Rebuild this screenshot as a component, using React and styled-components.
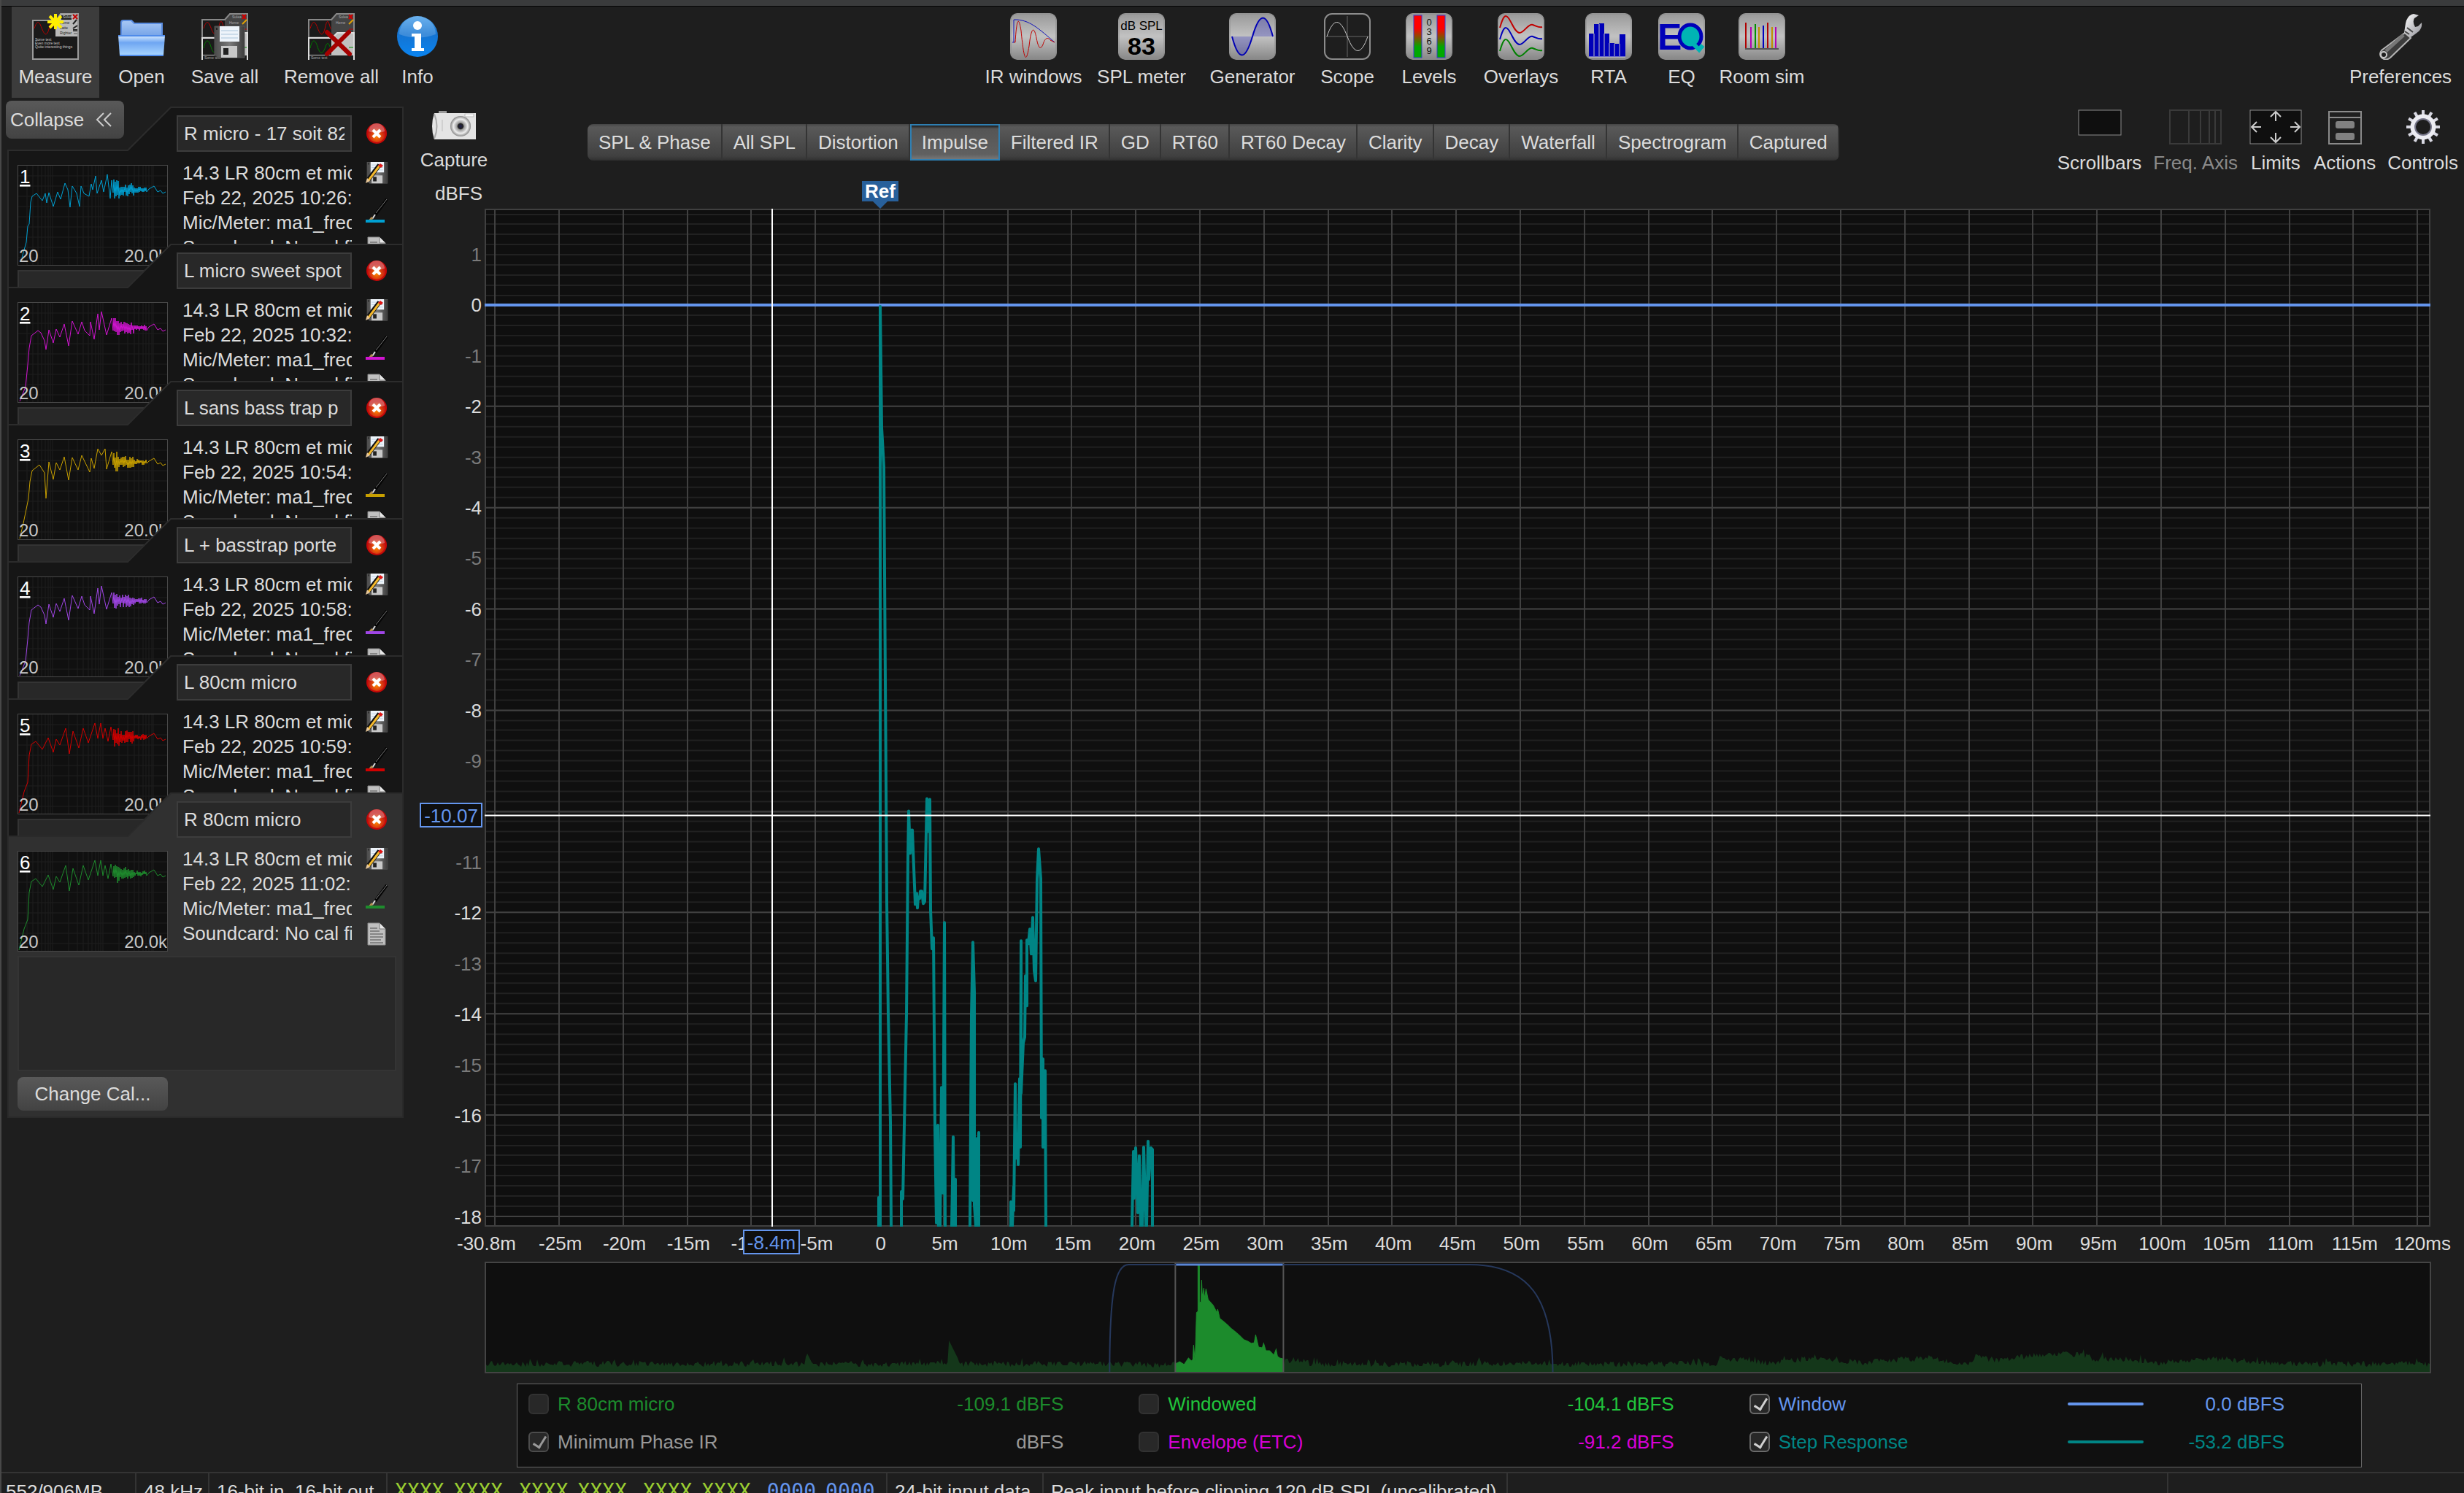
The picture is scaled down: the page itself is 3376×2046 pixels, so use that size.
import React from "react";
import styled, { createGlobalStyle, css } from "styled-components";

const GlobalStyle = createGlobalStyle`
  * {
    box-sizing: border-box;
  }

  body {
    margin: 0;
    background: #1e1e1e;
    color: #dcdcdc;
    font-family: "Liberation Sans", Arial, sans-serif;
    font-size: 26px;
    line-height: 34px;
  }

  button,
  input,
  textarea {
    font: inherit;
    color: inherit;
    margin: 0;
    padding: 0;
    border: none;
    background: none;
  }

  svg {
    display: block;
  }
`;

const Page = styled.div`
  display: flex;
  flex-direction: column;
  height: 100vh;
  overflow: hidden;
  border-left: 2px solid #484848;
`;

const TitleEdge = styled.div`
  flex: none;
  height: 9px;
  background: #3a3b3c;
  border-bottom: 1px solid #050505;
`;

const Toolbar = styled.header`
  flex: none;
  display: flex;
  justify-content: space-between;
  height: 125px;
  padding: 0 18px 0 14px;
`;

const ToolGroup = styled.div`
  display: flex;
  gap: ${(p) => p.$gap || 0}px;
`;

const ToolButton = styled.button`
  display: flex;
  flex-direction: column;
  align-items: center;
  width: ${(p) => p.$width}px;
  padding-top: 9px;
  gap: 6px;
  white-space: nowrap;
  background: ${(p) => (p.$active ? "#3c3c3c" : "none")};
`;

const Body = styled.div`
  flex: 1;
  display: flex;
  min-height: 0;
`;

/* ---------- measurements panel ---------- */

const Sidebar = styled.aside`
  flex: none;
  width: 566px;
  padding: 4px 0 0 6px;
`;

const raised = css`
  background: linear-gradient(#595959, #434343);
  border-radius: 8px;
`;

const CollapseButton = styled.button`
  ${raised}
  position: relative;
  z-index: 1;
  display: flex;
  align-items: center;
  gap: 16px;
  width: 162px;
  height: 52px;
  padding-left: 6px;
`;

const CardList = styled.div`
  margin: -44px 0 0 2px;
`;

const Card = styled.section`
  position: relative;
  isolation: isolate;
  width: 543px;
  height: 446px;
  padding: 12px 10px 10px 14px;

  & + & {
    margin-top: -258px;
  }
`;

const CardShape = styled.svg`
  position: absolute;
  top: 0;
  left: 0;
  z-index: -1;
`;

const CardTop = styled.div`
  display: grid;
  grid-template-columns: 206px 240px 1fr;
  column-gap: 12px;
  height: 206px;
`;

const Thumb = styled.svg`
  align-self: end;
`;

const NameInput = styled.input`
  width: 240px;
  height: 50px;
  padding: 0 8px;
  background: #282828;
  border: 2px solid #3c3c3c;
`;

const Details = styled.div`
  margin-top: 12px;
  padding-left: 8px;
  overflow: hidden;
  white-space: nowrap;
`;

const CardIcons = styled.div`
  display: flex;
  flex-direction: column;
  gap: 20px;
  padding: 10px 0 0 6px;

  button:first-child {
    margin-bottom: 4px;
  }
`;

const IconButton = styled.button`
  width: 32px;
  height: 30px;
`;

const Notes = styled.textarea`
  display: block;
  width: 100%;
  height: 158px;
  margin: 6px 0 8px;
  background: #282828;
  border: 2px solid #343434;
  resize: none;
`;

const CalButton = styled.button`
  ${raised}
  width: 206px;
  height: 46px;
`;

/* ---------- graph panel ---------- */

const Main = styled.main`
  flex: 1;
  min-width: 0;
  display: flex;
  flex-direction: column;
`;

const GraphHeader = styled.div`
  display: flex;
  align-items: flex-start;
  height: 114px;
  padding: 16px 8px 0;
`;

const CaptureButton = styled.button`
  display: flex;
  flex-direction: column;
  align-items: center;
  gap: 10px;
  width: 92px;
  padding-top: 2px;
`;

const Tabs = styled.nav`
  display: flex;
  height: 50px;
  margin: 20px 0 0 137px;
  border-radius: 8px;
  overflow: hidden;
`;

const Tab = styled.button`
  padding: 0 14px 0 15px;
  white-space: nowrap;
  background: linear-gradient(#454545, #595959 8%, #404040 88%, #303030);
  border-right: 2px solid #343434;

  ${(p) =>
    p.$selected &&
    css`
      background: linear-gradient(#1c1c1c, #555 10%, #606060 86%, #777);
      border: 2px solid #2f7fb2;
      padding: 0 14px;
    `}
`;

const GraphTools = styled.div`
  display: flex;
  gap: 16px;
  margin-left: auto;
`;

const GraphTool = styled.button`
  display: flex;
  flex-direction: column;
  align-items: center;
  gap: 8px;
  white-space: nowrap;

  &:disabled {
    color: #8a8a8a;
  }
`;

const Graph = styled.div`
  flex: 1;
  min-height: 0;
  display: grid;
  grid-template-columns: 96px 1fr;
  grid-template-rows: 38px 1fr 48px;
  padding-right: 46px;
`;

const AxisTitle = styled.div`
  padding-right: 3px;
  text-align: right;
`;

const YAxis = styled.div`
  grid-row: 2;
  display: flex;
  flex-direction: column;
  justify-content: space-between;
  padding: 50px 4px 0 0;
  text-align: right;
  line-height: 26px;
`;

const YLabel = styled.span`
  min-height: 26px;
  color: ${(p) => (p.$minor ? "#7a7a7a" : "#dcdcdc")};
`;

const Plot = styled.div`
  grid-row: 2;
  grid-column: 2;
  position: relative;
  min-height: 0;
`;

const Fill = styled.svg`
  width: 100%;
  height: 100%;
`;

const XAxis = styled.div`
  grid-row: 3;
  grid-column: 2;
  display: grid;
  grid-template-columns: repeat(31, 1fr);
  margin: 0 -28px;
  line-height: 46px;
  text-align: center;
  white-space: nowrap;

  span:first-child {
    margin-left: -10px;
    text-align: left;
  }

  span:last-child {
    text-align: right;
  }
`;

const CursorBadge = styled.div`
  position: absolute;
  z-index: 1;
  height: 34px;
  line-height: 32px;
  text-align: center;
  color: #6495ed;
  background: #0f0f0f;
  border: 2px solid #6495ed;
`;

const YBadge = styled(CursorBadge)`
  left: -89px;
  width: 86px;
  top: 59.6%;
  transform: translateY(-50%);
`;

const XBadge = styled(CursorBadge)`
  left: 14.74%;
  width: 78px;
  bottom: -38px;
  transform: translateX(-50%);
`;

const RefMarker = styled.div`
  position: absolute;
  left: 20.33%;
  bottom: 100%;
  width: 50px;
  margin-bottom: 10px;
  line-height: 28px;
  text-align: center;
  font-weight: bold;
  color: #fff;
  background: #28609b;
  transform: translateX(-50%);

  &::after {
    content: "";
    position: absolute;
    top: 100%;
    left: 15px;
    border: 10px solid transparent;
    border-top-color: #28609b;
    border-bottom: none;
  }
`;

const Overview = styled.div`
  flex: none;
  height: 153px;
  margin: 0 45px 0 96px;
`;

const Legend = styled.div`
  flex: none;
  display: grid;
  grid-template-columns: repeat(3, 1fr);
  align-content: start;
  gap: 18px 103px;
  height: 115px;
  margin: 14px 140px 6px 140px;
  padding: 10px 105px 0 15px;
  background: #101010;
  border: 1px solid #666;
`;

const LegendItem = styled.div`
  display: flex;
  align-items: center;
  gap: 12px;
  color: ${(p) => p.$color};
`;

const Tick = styled.input`
  appearance: none;
  position: relative;
  width: 28px;
  height: 28px;
  border-radius: 6px;
  background: #282828;
  border: 2px solid #323232;

  &:checked {
    border-color: #6a6a6a;
  }

  &:checked::after {
    content: "";
    position: absolute;
    left: 8px;
    top: 1px;
    width: 8px;
    height: 16px;
    border: solid #d0d0d0;
    border-width: 0 3px 3px 0;
    transform: rotate(32deg);
  }

  &:checked:disabled {
    border-color: #4c4c4c;
  }

  &:checked:disabled::after {
    border-color: #999;
  }
`;

const LegendLabel = styled.label`
  flex: 1;
`;

const Swatch = styled.span`
  width: 104px;
  height: 4px;
  border-radius: 2px;
  background: currentColor;
`;

const LegendValue = styled.span`
  width: 181px;
  text-align: right;
  white-space: nowrap;
`;

/* ---------- status bar ---------- */

const StatusBar = styled.footer`
  flex: none;
  display: flex;
  height: 29px;
  overflow: hidden;
  white-space: nowrap;
  border-top: 2px solid #343434;
`;

const StatusCell = styled.div`
  flex: none;
  width: ${(p) => p.$width}px;
  padding: 8px 0 0 ${(p) => p.$pad || 10}px;
  border-right: 2px solid #343434;
`;

const Bits = styled.div`
  display: flex;
  gap: 22px;
  font-family: "DejaVu Sans Mono", monospace;
  font-size: 28px;
  color: #9acd32;
`;

const BitPair = styled.span`
  display: flex;
  gap: 13px;
  color: ${(p) => (p.$zero ? "#6495ed" : "inherit")};
`;

/* ---------- data ---------- */

// small repeatable generator, so the noise looks the same on every render
function noise(seed) {
  let s = seed;
  return () => {
    s = (s * 16807) % 2147483647;
    return s / 2147483647;
  };
}

const HEAD_A = "6,127 12,106 14,84 16,81 18,51 20,43 26,39 34,49 38,39 40,52 43,38 49,57 55,37 59,47 65,25 69,34 72,58 75,29 81,39 85,57 87,29 91,39 98,43 101,26 103,34 107,15 109,39 115,21 118,37 123,13 127,46 129,21";
const HEAD_B = "3,136 11,116 14,86 16,63 19,46 28,39 32,42 37,53 39,65 43,38 49,56 53,37 58,48 64,30 70,60 75,26 83,44 88,27 92,39 99,46 100,27 105,51 110,16 112,38 115,13 122,45 129,22";
const HEAD_C = "3,136 8,115 15,81 17,58 20,43 30,35 37,46 39,81 43,31 49,55 53,32 58,42 64,24 70,56 75,25 83,42 88,22 99,45 101,26 105,40 110,13 115,22 120,13 122,41 129,17";
const HEAD_D = "2,136 9,107 14,94 16,57 19,42 25,38 34,49 42,33 49,53 53,35 58,43 66,20 71,55 76,24 84,47 90,20 97,40 106,13 110,34 114,13 117,34 120,20 124,38 128,18";

const measurements = [
  { name: "R micro - 17 soit 82cm", time: "10:26:", color: "#00a0d2", head: HEAD_A, mid: 34 },
  { name: "L micro sweet spot", time: "10:32:", color: "#d214d2", head: HEAD_B, mid: 35 },
  { name: "L sans bass trap p", time: "10:54:", color: "#c8a000", head: HEAD_C, mid: 31 },
  { name: "L + basstrap porte", time: "10:58:", color: "#a046e6", head: HEAD_B, mid: 33 },
  { name: "L 80cm micro", time: "10:59:", color: "#d20000", head: HEAD_D, mid: 32 },
  { name: "R 80cm micro", time: "11:02:", color: "#1e8c2d", head: HEAD_D, mid: 31 },
];

function curve(head, mid, seed) {
  const rnd = noise(seed);
  let pts = head;
  for (let x = 131; x < 178; x += 1) {
    const amp = x < 140 ? 14 : x < 160 ? 9 : 4;
    const y = mid + (x % 2 ? 1 : -1) * amp * (0.3 + 0.7 * rnd());
    pts += ` ${x},${Math.round(y)}`;
  }
  return pts + ` 180,${mid - 1} 187,${mid - 5} 192,${mid + 3} 196,${mid + 1} 199,${mid + 5} 203,${mid + 3}`;
}

const tabs = [
  "SPL & Phase", "All SPL", "Distortion", "Impulse", "Filtered IR", "GD", "RT60",
  "RT60 Decay", "Clarity", "Decay", "Waterfall", "Spectrogram", "Captured",
];

// -10 stays blank, the cursor readout sits on that line
const yTicks = Array.from({ length: 20 }, (_, i) => 1 - i);
const xTicks = Array.from({ length: 31 }, (_, i) => {
  if (i === 0) return "-30.8m";
  const t = -30 + i * 5;
  if (t === 0) return "0";
  return t === 120 ? "120ms" : `${t}m`;
});

const stepResponse = [
  "540,1395 540,1356 542,1395 542,134 544,300 547,354 550,794 551,950 553,1105 556,1253 557,1395",
  "571,1395 571,1348 573,1358 578,1105 580,891 581,826 583,884 585,852 586,852 590,954 592,939 593,959 594,944 596,946 597,936 599,936 601,953 603,950 606,809 608,854 610,810 611,961 613,1015 615,1000 617,1263 619,1391 621,1257 622,1395 624,1395 626,1205 628,1350 630,979 631,1395",
  "640,1395 642,1273 643,1395 645,1331 645,1395",
  "665,1395 667,1105 669,1006 671,1074 671,1366 673,1395 675,1275 675,1395 677,1267 677,1395",
  "669,1010 669,1360",
  "721,1395 721,1362 723,1395 725,1341 725,1374 727,1200 728,1302 730,1269 731,1311 733,1193 734,1287 735,1004 735,1213 738,1144 740,1136 741,1052 743,1093 743,1003 745,1008 747,988 749,1022 751,972 753,1045 755,1059 757,919 759,878 762,919 763,1247 765,1166 765,1287 768,1182 769,1395",
  "887,1395 889,1293 890,1357 892,1288 895,1377 897,1299 899,1395 901,1395 903,1287 906,1395 907,1395 909,1279 910,1331 913,1288 915,1290 915,1395",
];

const decay = "946,152 946,140 952,137 958,141 964,132 968,136 970,134 971,114 973,136 975,70 977,68 977,5 979,5 979,55 981,56 982,25 983,50 985,36 986,52 988,37 991,52 998,60 1003,70 1004,65 1007,78 1012,82 1018,87 1023,92 1028,96 1034,101 1040,107 1045,109 1050,112 1054,111 1056,100 1060,117 1065,118 1067,112 1070,122 1075,122 1081,128 1084,120 1086,130 1089,132 1093,133 1093,152";

function floorPath() {
  const rnd = noise(4711);
  let d = "M0 152";
  for (let x = 0; x <= 2666; x += 2) {
    let level = 140;
    if (x > 905 && x < 930) level = 142;
    if (x > 1095 && x < 1130) level = 135;
    if (x > 1690) level = 139 - 6 * Math.abs(Math.sin(x / 43));
    if (x > 2040 && x < 2200) level = 135 - 8 * Math.abs(Math.sin(x / 55));
    if (x > 2440) level = 140;
    let y = level + (rnd() - 0.5) * 8;
    if (rnd() > 0.95) y -= 5;
    if (x >= 636 && x <= 648) y = 108 + (x - 636) * 2;
    if (x >= 440 && x <= 448) y = 126 + Math.abs(x - 442) * 2;
    d += `L${x} ${Math.round(y)}`;
  }
  return d + "L2666 152Z";
}

const legend = [
  { id: "ir", label: "R 80cm micro", value: "-109.1 dBFS", color: "#1c8b2c" },
  { id: "windowed", label: "Windowed", value: "-104.1 dBFS", color: "#21c43c" },
  { id: "window", label: "Window", value: "0.0 dBFS", color: "#6495ed", checked: true, line: true },
  { id: "minphase", label: "Minimum Phase IR", value: "dBFS", color: "#999", checked: true, disabled: true },
  { id: "etc", label: "Envelope (ETC)", value: "-91.2 dBFS", color: "#d800d8" },
  { id: "step", label: "Step Response", value: "-53.2 dBFS", color: "#008585", checked: true, line: true },
];

/* ---------- icons ---------- */

const Icon = ({ children, w = 64, h = 64 }) => (
  <svg width={w} height={h} viewBox={`0 0 ${w} ${h}`} fill="none" aria-hidden="true">
    {children}
  </svg>
);

const DefsSvg = styled.svg`
  position: absolute;
  width: 0;
  height: 0;
`;

const IconDefs = () => (
  <DefsSvg aria-hidden="true">
    <defs>
      <linearGradient id="tile" x2="0" y2="1">
        <stop offset="0" stopColor="#989898" />
        <stop offset=".5" stopColor="#c2c2c2" />
        <stop offset="1" stopColor="#868686" />
      </linearGradient>
      <linearGradient id="folderBack" x2="0" y2="1">
        <stop offset="0" stopColor="#a9c8f5" />
        <stop offset="1" stopColor="#6f9fe6" />
      </linearGradient>
      <linearGradient id="folderFront" x2="0" y2="1">
        <stop offset="0" stopColor="#d3e8ff" />
        <stop offset=".35" stopColor="#6fa6f2" />
        <stop offset="1" stopColor="#a9d6ff" />
      </linearGradient>
      <linearGradient id="info" x2="0" y2="1">
        <stop offset="0" stopColor="#4aa0ea" />
        <stop offset=".45" stopColor="#1474d2" />
        <stop offset="1" stopColor="#0a84f0" />
      </linearGradient>
      <linearGradient id="floppy" x2="1">
        <stop offset="0" stopColor="#4a4a4a" />
        <stop offset=".5" stopColor="#7a7a7a" />
        <stop offset="1" stopColor="#3c3c3c" />
      </linearGradient>
      <linearGradient id="level" x2="0" y2="1">
        <stop offset="0" stopColor="#f00" />
        <stop offset=".3" stopColor="#f00" />
        <stop offset=".75" stopColor="#00a800" />
      </linearGradient>
      <linearGradient id="steel" x1="0" y1="0" x2="1" y2="1">
        <stop offset="0" stopColor="#fff" />
        <stop offset="1" stopColor="#8f8f96" />
      </linearGradient>
      <radialGradient id="lens">
        <stop offset="0" stopColor="#1d1d4c" />
        <stop offset=".25" stopColor="#222" />
        <stop offset=".35" stopColor="#999" />
        <stop offset=".7" stopColor="#eee" />
        <stop offset="1" stopColor="#888" />
      </radialGradient>
      <radialGradient id="close" cy=".65">
        <stop offset="0" stopColor="#ff8a00" />
        <stop offset=".6" stopColor="#d83a10" />
        <stop offset="1" stopColor="#c01010" />
      </radialGradient>
    </defs>
  </DefsSvg>
);

const Tile = ({ children }) => (
  <Icon>
    <rect width="64" height="64" rx="10" fill="url(#tile)" />
    <rect x="1" y="1" width="62" height="62" rx="9" stroke="#8c8c8c" />
    {children}
  </Icon>
);

const MeasureIcon = () => (
  <Icon>
    <path d="M1 10H33L39 1H63V63H1Z" fill="#b9b9b9" stroke="#9a9a9a" strokeWidth="2" />
    <path d="M2 11H32V32H62V62H2Z" fill="#1a1a1a" />
    <rect x="40" y="3" width="14" height="6" fill="#222" />
    <path d="M3 21C7 8 10 12 13 20S20 36 24 18S30 24 32 22" stroke="#c00000" />
    <path d="M56 2l6 6m0-6l-6 6" stroke="#c00000" strokeWidth="2" />
    <path d="M56 15l5-6M56 21l6-4m-6 6h6" stroke="#222" strokeWidth="2" />
    <path d="M56 25h6m-5 3h5" stroke="#555" />
    <g fontSize="5" fill="#222">
      <text x="38" y="15">Home</text>
      <text x="38" y="22">Latte</text>
      <text x="38" y="29">Righter</text>
    </g>
    <g fontSize="5" fill="#ccc">
      <text x="42" y="7">Sulea</text>
      <text x="4" y="38">Some text</text>
      <text x="4" y="43">Even more text</text>
      <text x="4" y="48">Quite interesting things</text>
    </g>
    <path d="M32 1V22M21 12H43M24 4L40 20M40 4L24 20" stroke="#ffee00" strokeWidth="4" />
  </Icon>
);

const StackedCards = () => (
  <>
    <path d="M1 64V9H32L39 1H63V64" fill="#444" stroke="#888" strokeWidth="2" />
    <path d="M2 10H32V32H2Z" fill="#1a1a1a" />
    <path d="M3 21C7 8 10 12 13 20S20 36 24 18S30 24 32 22" stroke="#c00000" />
    <path d="M1 64V34H33L40 27H63V64" fill="#c0c0c0" stroke="#ddd" strokeWidth="2" />
    <path d="M2 35H32V57H2Z" fill="#1a1a1a" />
    <path d="M3 48C6 34 10 36 13 46S20 58 24 46S30 50 32 48" stroke="#007d00" />
    <rect x="2" y="58" width="60" height="6" fill="#1c1c1c" />
    <g fontSize="5" fill="#aaa">
      <text x="42" y="7">Sulea</text>
      <text x="38" y="15">Home</text>
      <text x="4" y="63">Some text</text>
    </g>
    <path d="M56 2l5 6m0-6l-5 6" stroke="#d00000" strokeWidth="2" />
    <path d="M56 15l6-6" stroke="#e0a000" strokeWidth="2" />
    <path d="M56 22h6" stroke="#c00000" />
    <path d="M56 47h6" stroke="#009000" />
  </>
);

const Floppy = () => (
  <>
    <path d="M0 0H41V43H5L0 39Z" fill="url(#floppy)" stroke="#555" />
    <rect x="7" y="0" width="27" height="21" fill="#eef4fa" />
    <path d="M9 6H32M9 11H32M9 16H32" stroke="#a9c4da" />
    <rect x="9" y="27" width="22" height="16" fill="#c8c8c8" />
    <rect x="12" y="30" width="7" height="9" fill="#222" />
    <path d="M2 2h2v3h-2z" fill="#222" />
  </>
);

const SaveIcon = () => (
  <Icon>
    <StackedCards />
    <g transform="translate(18 18)">
      <Floppy />
    </g>
  </Icon>
);

const RemoveIcon = () => (
  <Icon>
    <StackedCards />
    <path d="M26 26L57 56M56 26L26 56" stroke="#a40000" strokeWidth="6" strokeLinecap="round" />
  </Icon>
);

const OpenIcon = () => (
  <Icon>
    <path d="M4 34V13Q4 10 7 10H18L22 14H60V34Z" fill="url(#folderBack)" stroke="#5b8de0" strokeWidth="2" />
    <path d="M0 31H64L62 58H2Z" fill="url(#folderFront)" />
    <path d="M0 31H64M2 58H62" stroke="#4f8bea" strokeWidth="2" />
  </Icon>
);

const InfoIcon = () => (
  <Icon w={56}>
    <circle cx="28" cy="32" r="28" fill="url(#info)" />
    <path d="M3 29A25 25 0 0 1 53 29Q28 38 3 29Z" fill="#fff" opacity=".18" />
    <circle cx="28" cy="17" r="6" fill="#fff" />
    <path d="M20 28H33V48H37V52H20V48H24V32H20Z" fill="#fff" />
  </Icon>
);

const WrenchIcon = () => (
  <Icon>
    <path d="M38 27L46 34L18 61Q12 66 6 61Q2 56 6 51Z" fill="#3d3d3d" stroke="#b5b5b5" strokeWidth="2" />
    <path d="M12 52L36 30" stroke="#777" strokeWidth="5" />
    <circle cx="9" cy="57" r="4" fill="#1e1e1e" stroke="#ccc" strokeWidth="2" />
    <path d="M37 27Q38 20 39 14Q41 3 50 1L57 3L51 7Q48 12 52 19L56 18L61 13Q62 20 57 25Q52 29 46 33Z" fill="url(#steel)" />
    <path d="M41 20L49 26M38 25L44 29" stroke="#444" strokeWidth="2" />
  </Icon>
);

const CameraIcon = () => (
  <Icon w={60} h={40}>
    <rect x="9" y="0" width="11" height="4" fill="#999" />
    <path d="M3 3H60V39H3Q-3 21 3 3Z" fill="#e4e4e4" />
    <path d="M3 4Q10 21 3 38" stroke="#aaa" strokeWidth="2" />
    <path d="M14 12V28" stroke="#bbb" />
    <rect x="45" y="4" width="12" height="4" fill="#f8f8f8" stroke="#bbb" />
    <circle cx="39" cy="21" r="14" fill="url(#lens)" />
  </Icon>
);

const GearIcon = () => (
  <Icon w={46} h={48}>
    {[0, 30, 60, 90, 120, 150].map((a) => (
      <path key={a} d="M23 1V47" strokeWidth="4" transform={`rotate(${a} 23 24)`} stroke="#d8d8e2" />
    ))}
    <circle cx="23" cy="24" r="14" fill="#1e1e1e" stroke="#ececf2" strokeWidth="7" />
    <circle cx="23" cy="24" r="11" stroke="#77778a" strokeWidth="2" />
  </Icon>
);

const leftTools = [
  ["Measure", 120, <MeasureIcon />],
  ["Open", 92, <OpenIcon />],
  ["Save all", 112, <SaveIcon />],
  ["Remove all", 156, <RemoveIcon />],
  ["Info", 56, <InfoIcon />],
];

const centreTools = [
  ["IR windows", 136, (
    <Tile>
      <path d="M3 40H5V9C26 8 40 22 61 40" stroke="#1010b8" strokeWidth="1" />
      <path
        d="M5 40H7C9 5 12 5 15 24C19 66 22 70 26 45C29 18 33 18 36 34C39 50 42 50 45 43C48 33 52 33 55 37L61 40"
        stroke="#c00000"
      />
    </Tile>
  )],
  ["SPL meter", 160, (
    <Tile>
      <text x="32" y="23" fontSize="17" fill="#000" textAnchor="middle">dB SPL</text>
      <text x="32" y="57" fontSize="34" fontWeight="bold" fill="#000" textAnchor="middle">83</text>
    </Tile>
  )],
  ["Generator", 144, (
    <Tile>
      <path d="M4 32C13 66 22 66 32 32S51 -2 60 32Z" fill="#2020c0" opacity=".28" />
      <path d="M4 32C13 66 22 66 32 32S51 -2 60 32" stroke="#0000b4" strokeWidth="2" />
    </Tile>
  )],
  ["Scope", 116, (
    <Icon>
      <rect x="1" y="1" width="62" height="62" rx="10" fill="#1e1e1e" stroke="#8c8c8c" strokeWidth="2" />
      <path d="M32 4V60M3 32H61" stroke="#666" />
      <path d="M4 32C13 6 22 6 32 32S51 58 60 32" stroke="#ccc" />
    </Icon>
  )],
  ["Levels", 108, (
    <Tile>
      <rect x="11" y="3" width="11" height="58" fill="url(#level)" stroke="#3a3ad0" />
      <rect x="43" y="3" width="11" height="58" fill="url(#level)" stroke="#3a3ad0" />
      <g fontSize="13" fill="#111" textAnchor="middle">
        <text x="32" y="17">0</text>
        <text x="32" y="30">3</text>
        <text x="32" y="43">6</text>
        <text x="32" y="56">9</text>
      </g>
    </Tile>
  )],
  ["Overlays", 144, (
    <Tile>
      <g strokeWidth="2">
        <path d="M3 20C7 6 10 0 15 7S24 27 30 27S42 14 48 16S56 20 61 19" stroke="#c00000" />
        <path d="M3 36C7 22 10 16 15 23S24 43 30 43S42 30 48 32S56 36 61 35" stroke="#0000b8" />
        <path d="M3 52C7 38 10 32 15 39S24 59 30 59S42 46 48 48S56 52 61 51" stroke="#008000" />
      </g>
    </Tile>
  )],
  ["RTA", 96, (
    <Tile>
      <path d="M5 60V28H12V15H19V14H26V28H33V41H40V42H47V29H55V60Z" fill="#0000b8" />
      <path d="M12 28V59M19 15V59M26 28V59M33 41V59M40 42V59M47 42V59" stroke="#c2c2c2" />
      <path d="M5 60H55" stroke="#ddd" />
    </Tile>
  )],
  ["EQ", 104, (
    <Tile>
      <text x="-1" y="50" fontSize="50" fontWeight="bold" fill="#0000b8">E</text>
      <ellipse cx="44" cy="32" rx="15" ry="16" fill="#00b4b4" stroke="#0000b8" strokeWidth="5" />
      <path d="M46 40L56 50L61 44" stroke="#00b4b4" strokeWidth="6" />
    </Tile>
  )],
  ["Room sim", 116, (
    <Tile>
      <path d="M10 13V49M40 13V49" stroke="#b00000" strokeWidth="2" />
      <path d="M17 19V49M51 19V49" stroke="#b400b4" strokeWidth="2" />
      <path d="M23 15V49" stroke="#009000" strokeWidth="2" />
      <path d="M28 19V49M46 19V49" stroke="#c09000" strokeWidth="2" />
      <path d="M34 17V49" stroke="#0000c0" strokeWidth="2" />
      <path d="M9 49H55" stroke="#555" strokeWidth="2" />
    </Tile>
  )],
];

const graphTools = [
  ["Scrollbars", false, (
    <Icon w={60} h={48}>
      <rect x="1" y="1" width="58" height="34" fill="#0f0f0f" stroke="#8c8c8c" />
    </Icon>
  )],
  ["Freq. Axis", true, (
    <Icon w={72} h={48}>
      <path d="M1 1H71V47H1ZM27 1V47M43 1V47M55 1V47M63 1V47" stroke="#3a3a3a" strokeWidth="2" />
    </Icon>
  )],
  ["Limits", false, (
    <Icon w={72} h={48}>
      <rect x="1" y="1" width="70" height="46" fill="#0f0f0f" stroke="#8c8c8c" />
      <path
        d="M36 16V3M29 10L36 3L43 10M36 32V45M29 38L36 45L43 38M16 24H3M10 17L3 24L10 31M56 24H69M62 17L69 24L62 31"
        stroke="#ccc"
        strokeWidth="2"
      />
    </Icon>
  )],
  ["Actions", false, (
    <Icon w={46} h={48}>
      <path d="M1 3H45V47H1ZM1 11H45" stroke="#8a8a8a" strokeWidth="2" />
      <rect x="10" y="16" width="26" height="10" rx="3" fill="#808080" />
      <rect x="10" y="32" width="26" height="10" rx="3" fill="#808080" />
    </Icon>
  )],
  ["Controls", false, <GearIcon />],
];

/* ---------- parts ---------- */

const Chevrons = () => (
  <Icon w={24} h={20}>
    <path d="M11 1L2 10L11 19M21 1L12 10L21 19" stroke="#ccc" strokeWidth="2" />
  </Icon>
);

function MeasurementCard({ item, index, selected }) {
  const n = index + 1;
  return (
    <Card>
      <CardShape width="543" height="446" viewBox="0 0 543 446" aria-hidden="true">
        <path
          d="M1 60H165L224 1H542V445H1Z"
          fill={selected ? "#303030" : "#161616"}
          stroke={selected ? "#2a2a2a" : "#2c2c2c"}
          strokeWidth="2"
        />
      </CardShape>
      <CardTop>
        <Thumb width="206" height="138" viewBox="0 0 206 138" fill="none">
          <rect x="0.5" y="0.5" width="205" height="137" fill="#101010" stroke="#484848" />
          <path
            d="M1 15H205M1 29H205M1 43H205M1 57H205M1 71H205M1 85H205M1 99H205M1 113H205M1 127H205M13 1V137M21 1V137M28 1V137M33 1V137M38 1V137M42 1V137M45 1V137M48 1V137M70 1V137M82 1V137M90 1V137M97 1V137M102 1V137M107 1V137M111 1V137M114 1V137M117 1V137M139 1V137M151 1V137M160 1V137M166 1V137M172 1V137M176 1V137M180 1V137M184 1V137M186 1V137"
            stroke="#1f1f1f"
          />
          <polyline points={curve(item.head, item.mid, 91 + index * 7)} stroke={item.color} strokeWidth="1" />
          <text x="3" y="25" fontSize="26" fill="#fff" textDecoration="underline">{n}</text>
          <text x="2" y="133" fontSize="24" fill="#c8c8c8">20</text>
          <text x="205" y="133" fontSize="24" fill="#c8c8c8" textAnchor="end">20.0k</text>
        </Thumb>
        <div>
          <NameInput aria-label={`Measurement ${n} name`} defaultValue={item.name} />
          <Details>
            <div>14.3 LR 80cm et micro</div>
            <div>Feb 22, 2025 {item.time}</div>
            <div>Mic/Meter: ma1_freq</div>
            <div>Soundcard: No cal file</div>
          </Details>
        </div>
        <CardIcons>
          <IconButton aria-label="Remove">
            <Icon w={32} h={30}>
              <circle cx="16" cy="15" r="13" fill="url(#close)" stroke="#c40808" strokeWidth="2" />
              <path d="M5 12A11 11 0 0 1 27 12Q16 16 5 12Z" fill="#fff" opacity=".3" />
              <path d="M11 10L21 20M21 10L11 20" stroke="#fff" strokeWidth="4" />
            </Icon>
          </IconButton>
          <IconButton aria-label="Save">
            <Icon w={32} h={30}>
              <g transform="translate(3 0) scale(.68)">
                <Floppy />
              </g>
              <path d="M4 25L20 4" stroke="#111" strokeWidth="6" />
              <path d="M5 25L20 5" stroke="#f5b92c" strokeWidth="3" />
              <path d="M18 5L21 2L25 5L22 8Z" fill="#e01818" />
              <path d="M1 29L3 22L7 26Z" fill="#e8c89a" />
            </Icon>
          </IconButton>
          <IconButton aria-label="Trace colour">
            <Icon w={32} h={34}>
              <path d="M30 1L14 23" stroke="#050505" strokeWidth="4" />
              <path d="M30 1L15 20" stroke="#777" />
              <path d="M14 22L10 28" stroke="#ddd" strokeWidth="2" />
              <path d="M10 26L6 31" stroke="#b08c50" strokeWidth="3" />
              <rect x="1" y="29" width="26" height="4" fill={item.color} />
            </Icon>
          </IconButton>
          <IconButton aria-label="Notes">
            <Icon w={32} h={34}>
              <path d="M4 3H20L28 11V33H4Z" fill="#c0c0c0" stroke="#8a8a8a" />
              <path d="M20 3V11H28" fill="#e8e8e8" stroke="#777" />
              <path d="M7 10H17M7 14H20M7 18H25M7 22H25M7 26H22M7 30H25" stroke="#858585" strokeWidth="2" />
            </Icon>
          </IconButton>
        </CardIcons>
      </CardTop>
      <Notes aria-label={`Measurement ${n} notes`} />
      {selected && <CalButton>Change Cal...</CalButton>}
    </Card>
  );
}

function ImpulsePlot() {
  const minor = [];
  for (let db = 1.8; db > -18.2; db -= 0.2) minor.push(Math.round(132.5 - db * 69.4));
  const major = [];
  for (let db = 0; db >= -18; db -= 2) major.push(Math.round(132.5 - db * 69.4));
  const cols = [];
  for (let t = -30; t <= 120; t += 5) cols.push(Math.round(541 + t * 17.56));

  return (
    <Fill viewBox="0 0 2666 1396" preserveAspectRatio="none" fill="none">
      <rect width="2666" height="1396" fill="#0f0f0f" />
      <path d={minor.map((y) => `M0 ${y}H2666`).join("")} stroke="#212121" strokeWidth="2" />
      <path
        d={major.map((y) => `M0 ${y}H2666`).join("") + cols.map((x) => `M${x} 0V1396`).join("")}
        stroke="#404040"
        strokeWidth="2"
      />
      <rect x="1" y="1" width="2664" height="1394" stroke="#404040" strokeWidth="2" />
      <path d="M0 132H2666" stroke="#6495ed" strokeWidth="4" />
      <g stroke="#008585" strokeWidth="4" strokeLinejoin="round" strokeLinecap="round">
        {stepResponse.map((pts) => (
          <polyline key={pts} points={pts} />
        ))}
      </g>
      <path d="M394 0V1400M-4 832H2666" stroke="#fff" strokeWidth="2" />
    </Fill>
  );
}

export default function App() {
  return (
    <>
      <GlobalStyle />
      <IconDefs />
      <Page>
        <TitleEdge />
        <Toolbar>
          <ToolGroup $gap={12}>
            {leftTools.map(([label, width, icon]) => (
              <ToolButton key={label} $width={width} $active={label === "Measure"}>
                {icon}
                {label}
              </ToolButton>
            ))}
          </ToolGroup>
          <ToolGroup>
            {centreTools.map(([label, width, icon]) => (
              <ToolButton key={label} $width={width}>
                {icon}
                {label}
              </ToolButton>
            ))}
          </ToolGroup>
          <ToolButton $width={138}>
            <WrenchIcon />
            Preferences
          </ToolButton>
        </Toolbar>

        <Body>
          <Sidebar>
            <CollapseButton>
              Collapse
              <Chevrons />
            </CollapseButton>
            <CardList>
              {measurements.map((item, i) => (
                <MeasurementCard key={item.name} item={item} index={i} selected={i === 5} />
              ))}
            </CardList>
          </Sidebar>

          <Main>
            <GraphHeader>
              <CaptureButton>
                <CameraIcon />
                Capture
              </CaptureButton>
              <Tabs>
                {tabs.map((t) => (
                  <Tab key={t} $selected={t === "Impulse"}>{t}</Tab>
                ))}
              </Tabs>
              <GraphTools>
                {graphTools.map(([label, disabled, icon]) => (
                  <GraphTool key={label} disabled={disabled}>
                    {icon}
                    {label}
                  </GraphTool>
                ))}
              </GraphTools>
            </GraphHeader>

            <Graph>
              <AxisTitle>dBFS</AxisTitle>
              <YAxis>
                {yTicks.map((t) => (
                  <YLabel key={t} $minor={t % 2 !== 0}>{t === -10 ? "" : t}</YLabel>
                ))}
              </YAxis>
              <Plot>
                <ImpulsePlot />
                <RefMarker>Ref</RefMarker>
                <YBadge>-10.07</YBadge>
                <XBadge>-8.4m</XBadge>
              </Plot>
              <XAxis>
                {xTicks.map((t) => (
                  <span key={t}>{t}</span>
                ))}
              </XAxis>
            </Graph>

            <Overview>
              <Fill viewBox="0 0 2666 153" preserveAspectRatio="none" fill="none">
                <rect x="1" y="1" width="2664" height="151" fill="#0f0f0f" />
                <path d={floorPath()} fill="#14371a" />
                <rect x="946" y="2" width="148" height="150" fill="#0f0f0f" />
                <polygon points={decay} fill="#1c8b2c" stroke="#1c8b2c" />
                <path d="M946 1V152M1094 1V152" stroke="#555" strokeWidth="2" />
                <path d="M856 152C856 40 864 4 882 4H1349C1430 4 1463 50 1463 152" stroke="#26385c" strokeWidth="2" />
                <path d="M947 4H1093" stroke="#5a86d6" strokeWidth="3" />
                <rect x="1" y="1" width="2664" height="151" stroke="#444" strokeWidth="2" />
              </Fill>
            </Overview>

            <Legend>
              {legend.map((l) => (
                <LegendItem key={l.id} $color={l.color}>
                  <Tick type="checkbox" id={l.id} defaultChecked={l.checked} disabled={l.disabled} />
                  <LegendLabel htmlFor={l.id}>{l.label}</LegendLabel>
                  {l.line && <Swatch />}
                  <LegendValue>{l.value}</LegendValue>
                </LegendItem>
              ))}
            </Legend>
          </Main>
        </Body>

        <StatusBar>
          <StatusCell $width={185} $pad={6}>552/906MB</StatusCell>
          <StatusCell $width={100}>48 kHz</StatusCell>
          <StatusCell $width={244}>16-bit in, 16-bit out</StatusCell>
          <StatusCell $width={685}>
            <Bits>
              {["XXXX", "XXXX", "XXXX", "0000"].map((b, i) => (
                <BitPair key={i} $zero={b === "0000"}>
                  <span>{b}</span>
                  <span>{b}</span>
                </BitPair>
              ))}
            </Bits>
          </StatusCell>
          <StatusCell $width={214}>24-bit input data</StatusCell>
          <StatusCell $width={636}>Peak input before clipping 120 dB SPL (uncalibrated)</StatusCell>
          <StatusCell $width={905} />
        </StatusBar>
      </Page>
    </>
  );
}
